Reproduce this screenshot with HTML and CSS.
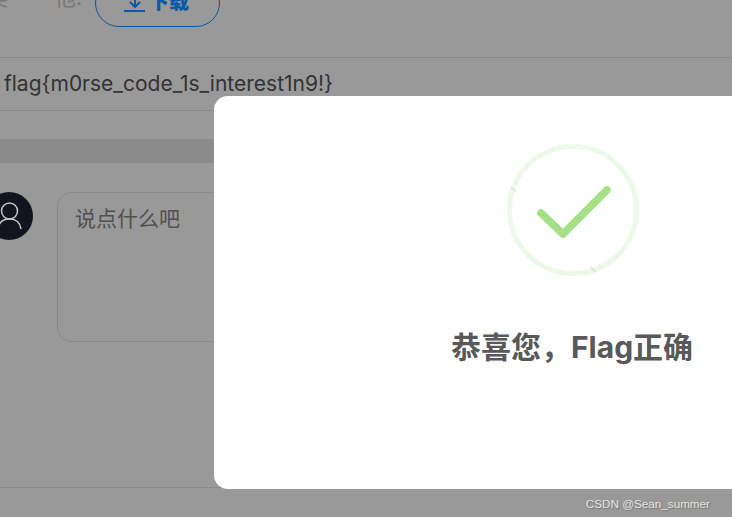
FILE: index.html
```html
<!DOCTYPE html>
<html lang="en">
<head>
  <meta charset="UTF-8">
  <title>Flag</title>
  <link rel="stylesheet" href="styles.css">
</head>
<body>
  <div class="page">
    <div class="topbar">
      <span class="top-text">奖</span>
      <span class="top-text second">他.</span>
      <button class="download">
        <svg class="download-icon" width="21" height="20" viewBox="0 0 21 20" fill="none" stroke="#0b5aa8" stroke-width="2">
          <path d="M11 0v15M6 10l5 5 5-5M0 19h21"/>
        </svg>
        下载
      </button>
    </div>
    <div class="flag-row">flag{m0rse_code_1s_interest1n9!}</div>
    <div class="bar"></div>
    <div class="comment-row">
      <div class="avatar">
        <svg width="48" height="48" viewBox="0 0 48 48" fill="none" stroke="#c4c4c6" stroke-width="1.500">
          <circle cx="24.500" cy="19" r="8"/>
          <path d="M13 37c1-7 5-10 11.500-10s10.500 3 11.500 10"/>
        </svg>
      </div>
      <div class="comment-box">说点什么吧</div>
    </div>
    <div class="footer"></div>
  </div>

  <div class="modal">
    <svg class="check" width="134" height="134" viewBox="0 0 134 134" fill="none">
      <circle cx="67" cy="67" r="63.500" stroke="#eef8e8" stroke-width="5"/>
      <path d="M5 44.500l5 4M84 123.700l5.500 5" stroke="#b5dfa0" stroke-width="1"/>
      <path d="M6.700 37.700l5.600 4.300M92.300 121.300l5 4" stroke="#dcefd0" stroke-width="1"/>
      <path d="M35 70l22 21 44-44" stroke="#a5df86" stroke-width="7.500" stroke-linecap="round" stroke-linejoin="round"/>
    </svg>
    <h2 class="modal-title">恭喜您，Flag正确</h2>
  </div>

  <div class="watermark">CSDN @Sean_summer</div>
</body>
</html>
```

FILE: styles.css
```css
* {
  box-sizing: border-box;
}
html, body {
  height: 100%;
}
body {
  margin: 0;
  background: #999999;
  font-family: Inter, "Noto Sans CJK SC", sans-serif;
  overflow: hidden;
}
.page {
  display: flex;
  flex-direction: column;
  height: 517px;
}
.topbar {
  display: flex;
  align-items: flex-end;
  height: 58px;
  padding-bottom: 30px;
  border-bottom: 1px solid #8a8a8a;
}
.top-text {
  align-self: flex-start;
  width: 8px;
  margin-top: -14px;
  overflow: hidden;
  font-size: 21px;
  line-height: 24px;
  color: #777;
  direction: rtl;
}
.top-text.second {
  width: auto;
  margin-left: 47px;
  direction: ltr;
}
.download {
  display: flex;
  align-items: center;
  justify-content: center;
  gap: 4px;
  flex: none;
  width: 125px;
  height: 48px;
  margin-left: 13px;
  padding: 0 2px 6px 0;
  background: none;
  border: 1px solid #0b5aa8;
  border-radius: 24px;
  color: #0b5aa8;
  font-family: inherit;
  font-size: 20px;
  font-weight: 900;
}
.download-icon {
  margin-top: 4px;
}
.flag-row {
  height: 53px;
  padding: 12px 0 0 4px;
  border-bottom: 1px solid #8a8a8a;
  color: #333;
  font-size: 21px;
  line-height: 28px;
}
.bar {
  height: 24px;
  margin-top: 28px;
  background: #8c8c8c;
}
.comment-row {
  display: flex;
  align-items: flex-start;
  gap: 24px;
  height: 325px;
  padding: 29px 0 0 0;
  margin-left: -15px;
  border-bottom: 1px solid #8a8a8a;
}
.avatar {
  flex: none;
  width: 48px;
  height: 48px;
  border-radius: 50%;
  background: #14141f;
}
.comment-box {
  flex: none;
  width: 300px;
  height: 150px;
  padding: 11px 17px;
  border: 1px solid #8a8a8a;
  border-radius: 14px;
  color: #505050;
  font-family: "Noto Sans CJK SC", sans-serif;
  font-size: 21px;
  line-height: 26px;
}
.footer {
  flex: 1;
}
.modal {
  position: absolute;
  left: 214px;
  top: 96px;
  width: 718px;
  height: 393px;
  padding-top: 47px;
  background: #fff;
  border-radius: 14px;
}
.check {
  display: block;
  margin-left: 292px;
}
.modal-title {
  margin: 50px 0 0 -1px;
  padding-left: 238px;
  color: #595959;
  font-size: 30px;
  font-weight: 700;
  line-height: 40px;
}
.watermark {
  position: absolute;
  right: 22px;
  top: 497px;
  color: #e4e4e4;
  font-family: "Liberation Sans", sans-serif;
  font-size: 11.700px;
  line-height: 14px;
  text-shadow: 1px 1px 1px rgba(0,0,0,0.25);
}
```
